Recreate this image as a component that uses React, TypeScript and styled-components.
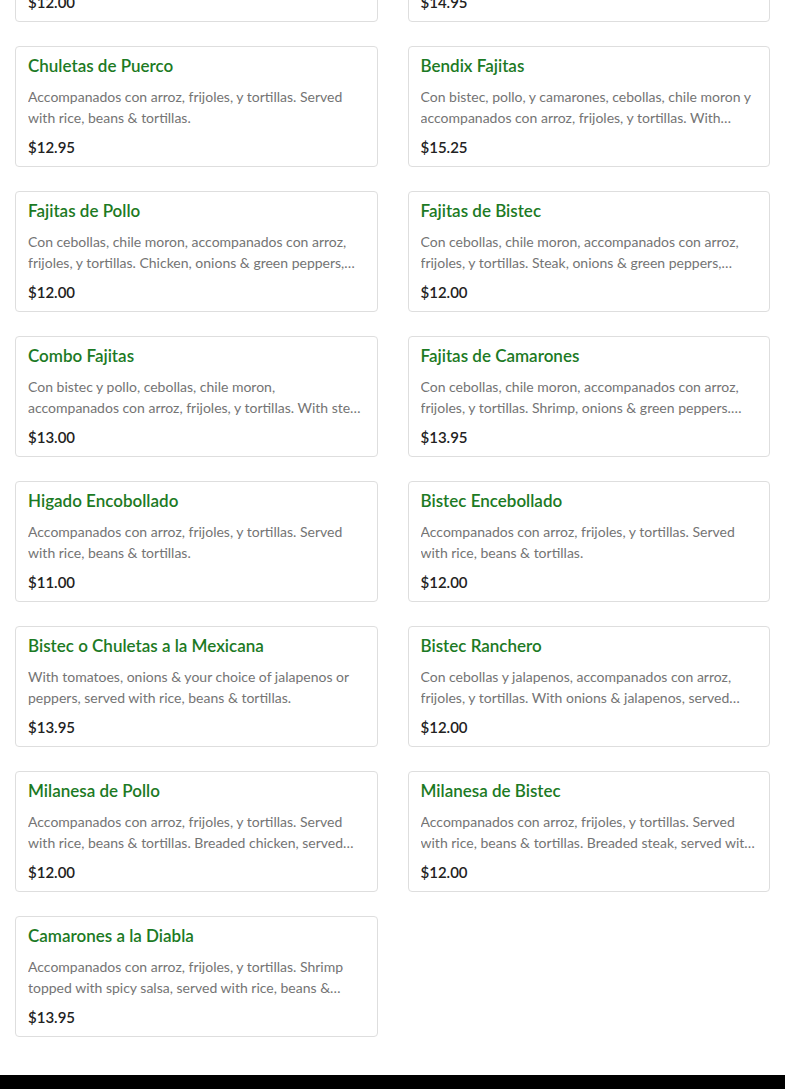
import React from "react";
import styled, { createGlobalStyle } from "styled-components";

const GlobalStyle = createGlobalStyle`
  html, body { margin: 0; padding: 0; background: #ffffff; }
  body { font-family: "Lato", "Noto Sans", sans-serif; -webkit-font-smoothing: antialiased; }
  * { box-sizing: border-box; }
`;

const Page = styled.div`
  display: flex;
  flex-direction: column;
  min-height: 100vh;
  overflow: hidden;
`;

const MenuGrid = styled.section`
  display: grid;
  grid-template-columns: 1fr 1fr;
  column-gap: 30px;
  row-gap: 24px;
  padding: 0 15px;
  margin-top: -99px;
`;

const Card = styled.article`
  display: flex;
  flex-direction: column;
  border: 1px solid #dedede;
  border-radius: 4px;
  background: #fff;
  padding: 9px 12px;
  min-width: 0;
`;

const Title = styled.h3`
  margin: 0 0 10px;
  font-size: 17px;
  line-height: 20px;
  font-weight: 600;
  color: #1c7a24;
`;

const Description = styled.p`
  margin: 0 0 9px;
  font-size: 14px;
  line-height: 21px;
  height: 42px;
  font-weight: 400;
  color: #747474;
  display: -webkit-box;
  -webkit-line-clamp: 2;
  -webkit-box-orient: vertical;
  overflow: hidden;
`;

const Price = styled.div`
  font-size: 15px;
  line-height: 20px;
  font-weight: 600;
  color: #222;
`;

const Footer = styled.footer`
  margin-top: 38px;
  height: 200px;
  background: #000;
`;

type Item = { name: string; desc: string; price: string };

const items: Item[] = [
  {
    name: "Carne Asada",
    desc: "Accompanados con arroz, frijoles, y tortillas. Served with rice, beans & tortillas.",
    price: "$12.00",
  },
  {
    name: "Carne Asada Tampiqueña",
    desc: "Con enchilada y guacamole, accompanados con arroz, frijoles, y tortillas.",
    price: "$14.95",
  },
  {
    name: "Chuletas de Puerco",
    desc: "Accompanados con arroz, frijoles, y tortillas. Served with rice, beans & tortillas.",
    price: "$12.95",
  },
  {
    name: "Bendix Fajitas",
    desc: "Con bistec, pollo, y camarones, cebollas, chile moron y accompanados con arroz, frijoles, y tortillas. With steak, chicken & shrimp, onions & green peppers, served with rice, beans & tortillas.",
    price: "$15.25",
  },
  {
    name: "Fajitas de Pollo",
    desc: "Con cebollas, chile moron, accompanados con arroz, frijoles, y tortillas. Chicken, onions & green peppers, served with rice, beans & tortillas.",
    price: "$12.00",
  },
  {
    name: "Fajitas de Bistec",
    desc: "Con cebollas, chile moron, accompanados con arroz, frijoles, y tortillas. Steak, onions & green peppers, served with rice, beans & tortillas.",
    price: "$12.00",
  },
  {
    name: "Combo Fajitas",
    desc: "Con bistec y pollo, cebollas, chile moron, accompanados con arroz, frijoles, y tortillas. With steak & chicken, onions & green peppers, served with rice, beans & tortillas.",
    price: "$13.00",
  },
  {
    name: "Fajitas de Camarones",
    desc: "Con cebollas, chile moron, accompanados con arroz, frijoles, y tortillas. Shrimp, onions & green peppers. Served with rice, beans & tortillas.",
    price: "$13.95",
  },
  {
    name: "Higado Encobollado",
    desc: "Accompanados con arroz, frijoles, y tortillas. Served with rice, beans & tortillas.",
    price: "$11.00",
  },
  {
    name: "Bistec Encebollado",
    desc: "Accompanados con arroz, frijoles, y tortillas. Served with rice, beans & tortillas.",
    price: "$12.00",
  },
  {
    name: "Bistec o Chuletas a la Mexicana",
    desc: "With tomatoes, onions & your choice of jalapenos or peppers, served with rice, beans & tortillas.",
    price: "$13.95",
  },
  {
    name: "Bistec Ranchero",
    desc: "Con cebollas y jalapenos, accompanados con arroz, frijoles, y tortillas. With onions & jalapenos, served with rice, beans & tortillas.",
    price: "$12.00",
  },
  {
    name: "Milanesa de Pollo",
    desc: "Accompanados con arroz, frijoles, y tortillas. Served with rice, beans & tortillas. Breaded chicken, served with salad.",
    price: "$12.00",
  },
  {
    name: "Milanesa de Bistec",
    desc: "Accompanados con arroz, frijoles, y tortillas. Served with rice, beans & tortillas. Breaded steak, served with salad.",
    price: "$12.00",
  },
  {
    name: "Camarones a la Diabla",
    desc: "Accompanados con arroz, frijoles, y tortillas. Shrimp topped with spicy salsa, served with rice, beans & tortillas.",
    price: "$13.95",
  },
];

export default function App() {
  return (
    <Page>
      <GlobalStyle />
      <MenuGrid>
        {items.map((it) => (
          <Card key={it.name}>
            <Title>{it.name}</Title>
            <Description>{it.desc}</Description>
            <Price>{it.price}</Price>
          </Card>
        ))}
      </MenuGrid>
      <Footer />
    </Page>
  );
}
